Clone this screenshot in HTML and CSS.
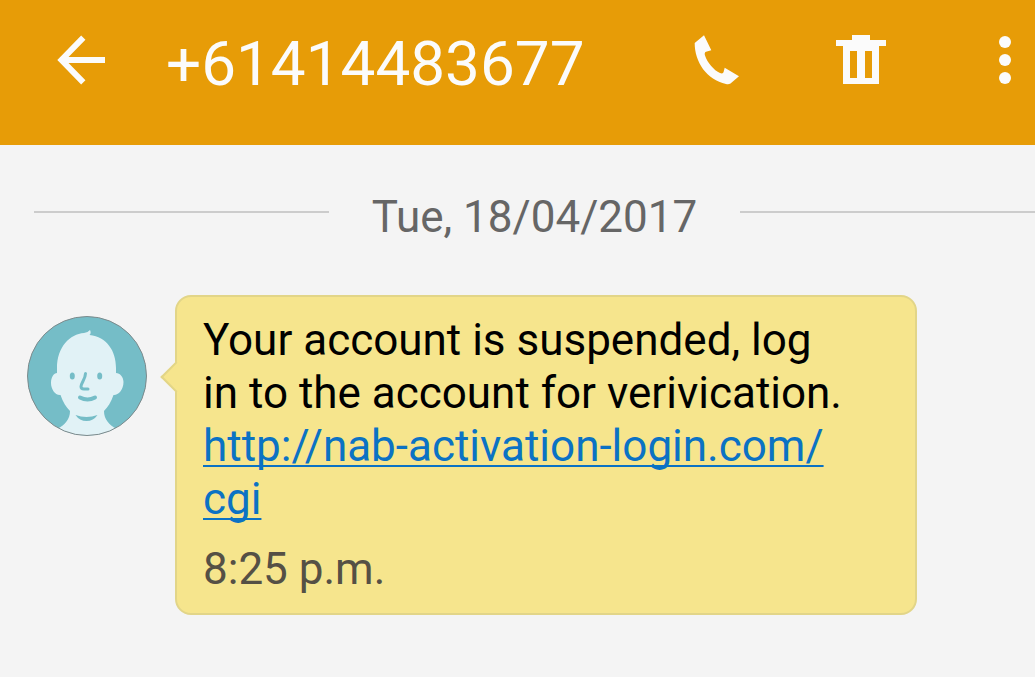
FILE: index.html
```html
<!DOCTYPE html>
<html lang="en">
<head>
    <meta charset="UTF-8">
    <meta name="viewport" content="width=device-width, initial-scale=1.0">
    <title>Messages</title>
    <link rel="stylesheet" href="styles.css">
</head>
<body>
    <header class="header">
        <button class="icon-btn" type="button" aria-label="Back">
            <svg viewBox="0 0 50 50" fill="none" stroke="currentColor" stroke-width="6">
                <path d="M27.300 2.700 5.500 25 27.300 47.300M5.500 25H49" />
            </svg>
        </button>
        <h1 class="title">+61414483677</h1>
        <div class="actions">
            <button class="icon-btn" type="button" aria-label="Call">
                <svg viewBox="0 0 50 50" fill="currentColor">
                    <path d="M12 .3 19.300 15.300 14 16.700C12.500 17.200 12.500 19 13 20.500C15 27 22 35.500 28 38C30.500 39 31.500 38 31.700 36.500L32.700 32.700 47 41.300 38.500 48.500Q36.500 49.800 34 49C15 45 2.500 27 2.700 8Z" />
                </svg>
            </button>
            <button class="icon-btn" type="button" aria-label="Delete">
                <svg viewBox="0 0 50 50" fill="currentColor" fill-rule="evenodd">
                    <path d="M16 0H34V5H50V11H43V49H7V11H0V5H16ZM14 16V43H21V16ZM29 16V43H36V16Z" />
                </svg>
            </button>
            <button class="icon-btn" type="button" aria-label="More options">
                <svg viewBox="0 0 50 50" fill="currentColor">
                    <circle cx="25" cy="7" r="6" />
                    <circle cx="25" cy="25" r="6" />
                    <circle cx="25" cy="43" r="6" />
                </svg>
            </button>
        </div>
    </header>

    <main class="thread">
        <div class="date-row">
            <time datetime="2017-04-18">Tue, 18/04/2017</time>
        </div>

        <article class="message">
            <svg class="avatar" viewBox="0 0 120 120" aria-hidden="true">
                <defs>
                    <clipPath id="avatar-clip"><circle cx="60" cy="60" r="59.500" /></clipPath>
                </defs>
                <circle cx="60" cy="60" r="59.500" fill="#75bdc7" />
                <path clip-path="url(#avatar-clip)" fill="#e1f2f6" d="M30 52C30 31 43 18 57 17Q61 16.500 63 14Q64.500 17 62.500 19C80 21 89 35 89 52V57C93 57 96.500 61 96.500 66C96.500 74 91 79.500 86.500 79C84 86 81 91 77 95C77 103 82 109 90 113V125H30V113C38 109 43 103 43 95C39 91 36 86 33.500 79C28 79.500 24 73 24 67C24 61 27 57 30 57Z" />
                <g fill="#75bdc7">
                    <ellipse cx="45.300" cy="60" rx="2.500" ry="3.500" />
                    <ellipse cx="72.700" cy="60" rx="2.500" ry="3.500" />
                    <path d="M48.500 99Q59.500 103 70.500 99Q66.500 105 59.500 105Q52.500 105 48.500 99Z" />
                </g>
                <g fill="none" stroke="#75bdc7" stroke-width="3" stroke-linecap="round">
                    <path d="M58.500 57.500C58.500 63 54 67 54 70.500Q54 73 57 73H61" />
                    <path stroke-width="4" d="M53 81.500Q60.500 85.500 68 81.500" />
                </g>
                <circle cx="60" cy="60" r="59.500" fill="none" stroke="#7d8a8c" />
            </svg>
            <div class="bubble">
                <p>Your account is suspended, log in to the account for verivication.</p>
                <p><a href="#"><span class="host">http://nab-activation-login.com/</span><wbr>cgi</a></p>
                <time class="sent" datetime="2017-04-18T20:25">8:25 p.m.</time>
            </div>
        </article>
    </main>
</body>
</html>
```

FILE: styles.css
```css
* {
    margin: 0;
    padding: 0;
    box-sizing: border-box;
}

body {
    font-family: Roboto, 'Liberation Sans', sans-serif;
    font-size: 44px;
    line-height: 53px;
    background: #f4f4f4;
    min-height: 100vh;
}

.header {
    display: flex;
    align-items: baseline;
    padding: 27px 5px 44px 56px;
    background: #e79c07;
    color: #fbfbfb;
}

.title {
    flex: 1;
    margin-left: 60px;
    font-size: 62px;
    font-weight: 400;
    line-height: 74px;
}

.actions {
    display: flex;
    gap: 94px;
}

.icon-btn {
    width: 50px;
    height: 50px;
    border: none;
    background: none;
    color: inherit;
    cursor: pointer;
}

.icon-btn svg {
    display: block;
    width: 100%;
    height: 100%;
}

.thread {
    padding: 46px 0;
}

.date-row {
    display: flex;
    gap: 43px;
    padding-left: 34px;
    color: #666;
}

/* rules on both sides of the date */
.date-row::before,
.date-row::after {
    content: "";
    flex: 1;
    height: 2px;
    margin-top: 20px;
    background: #ccc;
}

.message {
    display: flex;
    align-items: flex-start;
    gap: 28px;
    margin-top: 51px;
    padding: 0 118px 0 27px;
}

.avatar {
    flex: none;
    width: 120px;
    height: 120px;
    margin-top: 21px;
}

.bubble {
    position: relative;
    flex: 1;
    padding: 17px 64px 17px 26px;
    background: #f6e58d;
    border: 2px solid #e2d588;
    border-radius: 16px;
    color: #000;
}

/* pointer towards the avatar */
.bubble::before {
    content: "";
    position: absolute;
    top: 69px;
    left: -12px;
    width: 20px;
    height: 20px;
    background: inherit;
    border: solid #e2d588;
    border-width: 0 0 2px 2px;
    transform: rotate(45deg);
}

.bubble a {
    color: #0b72c4;
    text-decoration-thickness: 2px;
    text-underline-offset: 4px;
    text-decoration-skip-ink: none;
}

/* the address only breaks before its path */
.host {
    display: inline-block;
    text-decoration: underline 2px;
    text-underline-offset: 4px;
    text-decoration-skip-ink: none;
}

.sent {
    display: block;
    margin-top: 17px;
    color: #555045;
}
```
